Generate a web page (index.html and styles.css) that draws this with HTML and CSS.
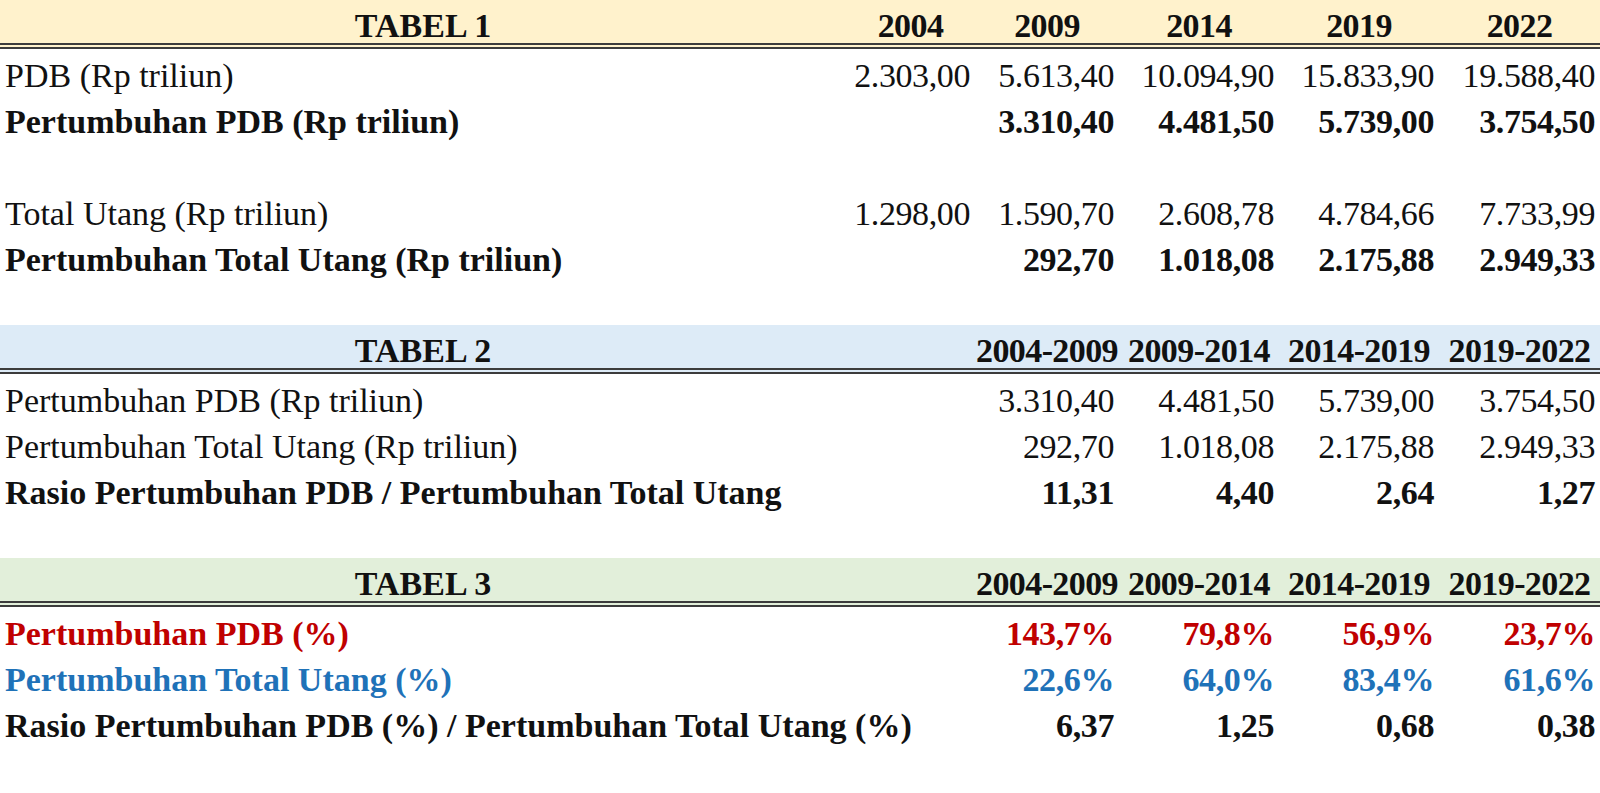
FILE: index.html
```html
<!DOCTYPE html>
<html lang="id">
<head>
<meta charset="utf-8">
<title>Tabel PDB dan Utang</title>
<link rel="stylesheet" href="styles.css">
</head>
<body>
<div class="sheet">
  <section class="tbl">
    <div class="row head head-yellow">
      <div class="lbl">TABEL 1</div>
      <div class="c">2004</div><div class="c">2009</div><div class="c">2014</div><div class="c">2019</div><div class="c">2022</div>
    </div>
    <div class="row">
      <div class="lbl">PDB (Rp triliun)</div>
      <div class="n">2.303,00</div><div class="n">5.613,40</div><div class="n">10.094,90</div><div class="n">15.833,90</div><div class="n">19.588,40</div>
    </div>
    <div class="row bold">
      <div class="lbl">Pertumbuhan PDB (Rp triliun)</div>
      <div class="n"></div><div class="n">3.310,40</div><div class="n">4.481,50</div><div class="n">5.739,00</div><div class="n">3.754,50</div>
    </div>
    <div class="row blank"></div>
    <div class="row">
      <div class="lbl">Total Utang (Rp triliun)</div>
      <div class="n">1.298,00</div><div class="n">1.590,70</div><div class="n">2.608,78</div><div class="n">4.784,66</div><div class="n">7.733,99</div>
    </div>
    <div class="row bold">
      <div class="lbl">Pertumbuhan Total Utang (Rp triliun)</div>
      <div class="n"></div><div class="n">292,70</div><div class="n">1.018,08</div><div class="n">2.175,88</div><div class="n">2.949,33</div>
    </div>
    <div class="row blank"></div>
  </section>

  <section class="tbl">
    <div class="row head head-blue">
      <div class="lbl">TABEL 2</div>
      <div class="c"></div><div class="c">2004-2009</div><div class="c">2009-2014</div><div class="c">2014-2019</div><div class="c">2019-2022</div>
    </div>
    <div class="row">
      <div class="lbl">Pertumbuhan PDB (Rp triliun)</div>
      <div class="n"></div><div class="n">3.310,40</div><div class="n">4.481,50</div><div class="n">5.739,00</div><div class="n">3.754,50</div>
    </div>
    <div class="row">
      <div class="lbl">Pertumbuhan Total Utang (Rp triliun)</div>
      <div class="n"></div><div class="n">292,70</div><div class="n">1.018,08</div><div class="n">2.175,88</div><div class="n">2.949,33</div>
    </div>
    <div class="row bold">
      <div class="lbl">Rasio Pertumbuhan PDB / Pertumbuhan Total Utang</div>
      <div class="n"></div><div class="n">11,31</div><div class="n">4,40</div><div class="n">2,64</div><div class="n">1,27</div>
    </div>
    <div class="row blank"></div>
  </section>

  <section class="tbl">
    <div class="row head head-green">
      <div class="lbl">TABEL 3</div>
      <div class="c"></div><div class="c">2004-2009</div><div class="c">2009-2014</div><div class="c">2014-2019</div><div class="c">2019-2022</div>
    </div>
    <div class="row bold red">
      <div class="lbl">Pertumbuhan PDB (%)</div>
      <div class="n"></div><div class="n">143,7%</div><div class="n">79,8%</div><div class="n">56,9%</div><div class="n">23,7%</div>
    </div>
    <div class="row bold blue">
      <div class="lbl">Pertumbuhan Total Utang (%)</div>
      <div class="n"></div><div class="n">22,6%</div><div class="n">64,0%</div><div class="n">83,4%</div><div class="n">61,6%</div>
    </div>
    <div class="row bold">
      <div class="lbl">Rasio Pertumbuhan PDB (%) / Pertumbuhan Total Utang (%)</div>
      <div class="n"></div><div class="n">6,37</div><div class="n">1,25</div><div class="n">0,68</div><div class="n">0,38</div>
    </div>
  </section>
</div>
</body>
</html>
```

FILE: styles.css
```css
html, body {
  margin: 0;
  padding: 0;
  background: #ffffff;
}

body {
  font-family: "Liberation Serif", "Times New Roman", serif;
  font-size: 34px;
  color: #111111;
}

.sheet {
  width: 1600px;
  height: 793px;
  overflow: hidden;
}

.row {
  display: grid;
  grid-template-columns: 846px 129px 144px 160px 160px 161px;
  height: 46px;
  box-sizing: border-box;
  padding-top: 7px;
  line-height: 39px;
  white-space: nowrap;
}

.row.blank {
  padding: 0;
}

.lbl {
  padding-left: 5px;
  overflow: visible;
}

.n {
  text-align: right;
  padding-right: 5px;
  letter-spacing: -0.4px;
}

.bold {
  font-weight: bold;
}

.red {
  color: #c00000;
}

.blue {
  color: #1f72b8;
}

.head {
  height: 49px;
  padding-top: 9px;
  line-height: 34px;
  font-weight: bold;
  border-bottom: 6px double #3c3c3c;
}

.head .lbl {
  text-align: center;
  padding-left: 0;
}

.head .c {
  text-align: center;
  letter-spacing: -0.6px;
}

.head-yellow {
  background: #fff2cc;
}

.head-blue {
  background: #ddebf7;
}

.head-green {
  background: #e2efda;
}
```
